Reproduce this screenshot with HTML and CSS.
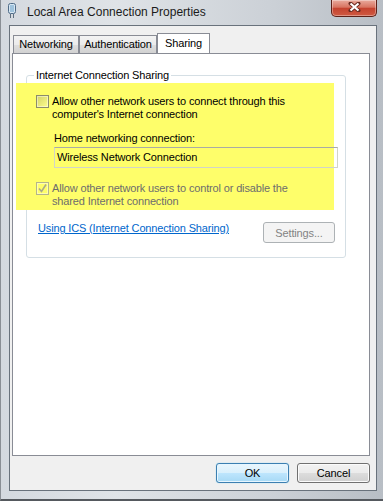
FILE: index.html
```html
<!DOCTYPE html>
<html lang="en">
  <head>
    <meta charset="UTF-8" />
    <meta name="viewport" content="width=device-width, initial-scale=1.0" />
    <title>Local Area Connection Properties</title>
    <link rel="stylesheet" href="styles.css">
  </head>
  <body>
    <div class="window">
      <div class="titlebar">
        <svg class="app-icon" width="10" height="16" viewBox="0 0 10 16">
          <rect x="1.5" y="0.5" width="7" height="10" rx="2" fill="#d6e6f2" stroke="#4f6c88" />
          <rect x="3" y="2" width="4" height="7" fill="#9fc3dd" />
          <path d="M3.5 11v4M6.5 11v4" stroke="#5d6f80" stroke-width="1" />
        </svg>
        <span class="title">Local Area Connection Properties</span>
        <div class="close-btn">
          <svg width="13" height="10" viewBox="0 0 13 10">
            <path d="M2.5 1.5l8 7M10.5 1.5l-8 7" stroke="#6a2a20" stroke-width="4" stroke-linecap="round" />
            <path d="M2.5 1.5l8 7M10.5 1.5l-8 7" stroke="#ffffff" stroke-width="2.2" />
          </svg>
        </div>
      </div>

      <div class="client">
        <div class="tabs">
          <div class="tab tab-networking">Networking</div>
          <div class="tab tab-auth">Authentication</div>
          <div class="tab tab-active">Sharing</div>
        </div>

        <div class="panel">
          <fieldset class="group">
            <legend>Internet Connection Sharing</legend>

            <div class="highlight">
              <div class="check">
                <span class="box"></span>
                <span class="check-text">Allow other network users to connect through this<br />computer's Internet connection</span>
              </div>

              <div class="field-label">Home networking connection:</div>
              <div class="select">Wireless Network Connection</div>

              <div class="check check-disabled">
                <span class="box">
                  <svg width="11" height="11" viewBox="0 0 11 11">
                    <path d="M2 5.5l2.5 3 4.5-7" fill="none" stroke="#a9a98a" stroke-width="1.6" />
                  </svg>
                </span>
                <span class="check-text">Allow other network users to control or disable the<br />shared Internet connection</span>
              </div>
            </div>

            <div class="group-footer">
              <a class="help-link" href="#">Using ICS (Internet Connection Sharing)</a>
              <button class="btn btn-settings" disabled>Settings...</button>
            </div>
          </fieldset>
        </div>

        <div class="buttons">
          <button class="btn btn-default">OK</button>
          <button class="btn">Cancel</button>
        </div>
      </div>
    </div>
  </body>
</html>
```

FILE: styles.css
```css
* {
  box-sizing: border-box;
}

body {
  margin: 0;
  font-family: "Liberation Sans", Arial, sans-serif;
  font-size: 11px;
  letter-spacing: -0.15px;
  color: #000;
}

.window {
  width: 383px;
  height: 501px;
  display: flex;
  flex-direction: column;
  padding: 0 6px 8px 8px;
  background: linear-gradient(to right, #d4d9df, #dfe3e7 30%, #ccd1d7 70%, #b8bec5);
  border-bottom: 2px solid #55595e;
  border-left: 1px solid #8a8f95;
}

.titlebar {
  height: 25px;
  display: flex;
  align-items: flex-start;
  flex-shrink: 0;
}

.app-icon {
  margin: 3px 0 0 -2px;
}

.title {
  margin-left: 10px;
  padding-top: 5px;
  line-height: 14px;
  font-size: 12px;
  letter-spacing: 0;
  color: #1b1b1b;
}

.close-btn {
  margin-left: auto;
  width: 46px;
  height: 17px;
  display: flex;
  justify-content: center;
  padding-top: 2px;
  border: 1px solid #5e2118;
  border-top: none;
  border-radius: 0 0 5px 5px;
  background: linear-gradient(#e9ab9d, #d87461 45%, #c5432f 52%, #cf5a42);
  box-shadow: inset 0 0 0 1px rgba(255, 255, 255, 0.35);
}

.client {
  flex: 1;
  display: flex;
  flex-direction: column;
  padding: 7px 6px 0 2px;
  background: #f0f0f0;
  border: 1px solid #69727c;
}

.tabs {
  height: 20px;
  display: flex;
  align-items: flex-end;
  padding-left: 1px;
}

.tab {
  height: 18px;
  line-height: 16px;
  text-align: center;
  border: 1px solid #898c95;
  border-bottom: none;
  background: linear-gradient(#f3f3f3, #ebebeb 50%, #dedede 50%, #d2d2d2);
}

.tab-networking {
  width: 66px;
}

.tab-auth {
  width: 78px;
}

.tab-active {
  width: 53px;
  height: 21px;
  line-height: 19px;
  margin-bottom: -1px;
  background: #fff;
}

.panel {
  height: 403px;
  flex-shrink: 0;
  padding: 15px 0 0 13px;
  background: #fff;
  border: 1px solid #898c95;
}

.group {
  width: 320px;
  height: 189px;
  margin: 0;
  padding: 0;
  min-width: 0;
  border: 1px solid #d5dfe5;
  border-radius: 3px;
}

.group legend {
  margin-left: 7px;
  padding: 0 2px;
  line-height: 13px;
}

.highlight {
  width: 318px;
  height: 127px;
  margin: 1px 0 0 -11px;
  padding: 12px 0 0 20px;
  background: #fefe6a;
}

.check {
  display: flex;
  gap: 3px;
  line-height: 13px;
}

.box {
  width: 13px;
  height: 13px;
  flex-shrink: 0;
  display: flex;
  align-items: center;
  justify-content: center;
  border: 1px solid #8c8c6a;
  background: linear-gradient(135deg, rgba(110, 110, 90, 0.3), rgba(255, 255, 255, 0.25));
  box-shadow: inset 0 0 0 1px rgba(255, 255, 255, 0.45);
}

.field-label {
  margin-top: 11px;
  padding-left: 18px;
  line-height: 13px;
}

.select {
  width: 284px;
  height: 21px;
  margin: 2px 0 0 18px;
  padding-left: 2px;
  line-height: 19px;
  border: 1px solid #d2d4c8;
  border-top-color: #a9aba4;
}

.check-disabled {
  margin-top: 14px;
  color: #6d6d6d;
}

.check-disabled .box {
  border-color: #b4b48c;
  background: transparent;
}

.group-footer {
  display: flex;
  justify-content: space-between;
  align-items: flex-start;
  margin-top: 12px;
  padding: 0 10px 0 11px;
}

.help-link {
  line-height: 13px;
  color: #0066cc;
}

.btn {
  height: 21px;
  padding: 0;
  font: inherit;
  letter-spacing: -0.15px;
  color: #000;
  border: 1px solid #707070;
  border-radius: 3px;
  background: linear-gradient(#f2f2f2, #ebebeb 50%, #dddddd 50%, #cfcfcf);
  box-shadow: inset 0 0 0 1px #fbfbfb;
}

.btn-settings {
  width: 72px;
}

.btn:disabled {
  color: #838383;
  border-color: #adb2b5;
  background: #f4f4f4;
  box-shadow: none;
}

.buttons {
  display: flex;
  justify-content: flex-end;
  gap: 8px;
  margin-top: 7px;
}

.buttons .btn {
  width: 73px;
  height: 20px;
}

.btn-default {
  border-color: #3c7fb1;
  background: linear-gradient(#eaf6fd, #d9f0fc 50%, #bee6fd 50%, #a7d9f5);
  box-shadow: inset 0 0 0 1px #e6f6ff, 0 0 1px #5bc8f0;
}
```
